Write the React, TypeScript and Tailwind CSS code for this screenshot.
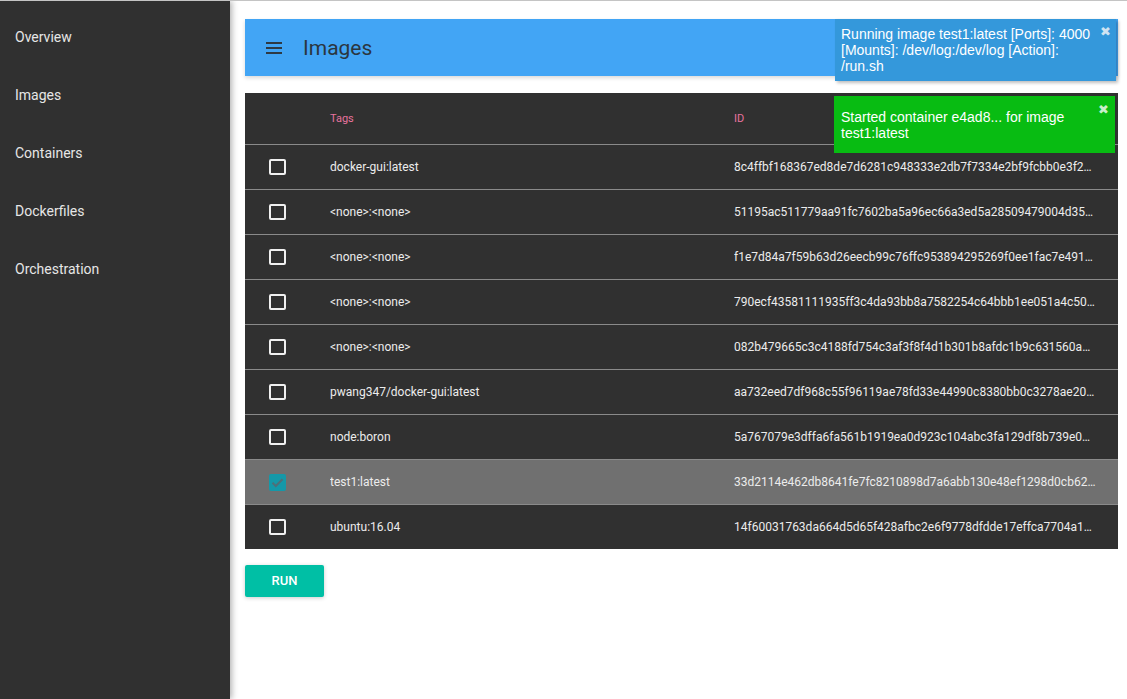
import React from "react";

const rows = [
  { tag: "docker-gui:latest", id: "8c4ffbf168367ed8de7d6281c948333e2db7f7334e2bf9fcbb0e3f2a1b7c9d0e" },
  { tag: "<none>:<none>", id: "51195ac511779aa91fc7602ba5a96ec66a3ed5a28509479004d35c8e2f1a0b3d" },
  { tag: "<none>:<none>", id: "f1e7d84a7f59b63d26eecb99c76ffc953894295269f0ee1fac7e4913c2d8a6b1" },
  { tag: "<none>:<none>", id: "790ecf43581111935ff3c4da93bb8a7582254c64bbb1ee051a4c50d2e6f7a8b9" },
  { tag: "<none>:<none>", id: "082b479665c3c4188fd754c3af3f8f4d1b301b8afdc1b9c631560a7e4d2c1b0a" },
  { tag: "pwang347/docker-gui:latest", id: "aa732eed7df968c55f96119ae78fd33e44990c8380bb0c3278ae20f1e2d3c4b5" },
  { tag: "node:boron", id: "5a767079e3dffa6fa561b1919ea0d923c104abc3fa129df8b739e01c2d3e4f5a" },
  { tag: "test1:latest", id: "33d2114e462db8641fe7fc8210898d7a6abb130e48ef1298d0cb62a1b2c3d4e5", selected: true },
  { tag: "ubuntu:16.04", id: "14f60031763da664d5d65f428afbc2e6f9778dfdde17effca7704a1b2c3d4e5f" },
];

const nav = ["Overview", "Images", "Containers", "Dockerfiles", "Orchestration"];

function Checkbox({ checked }: { checked?: boolean }) {
  if (checked) {
    return (
      <svg width="17" height="17" viewBox="0 0 17 17">
        <rect x="0" y="0" width="17" height="17" rx="2" fill="#1598a8" />
        <path d="M3.5 8.8 L6.8 12 L13.5 5.3" fill="none" stroke="#4f6f78" strokeWidth="2" />
      </svg>
    );
  }
  return <div className="w-[17px] h-[16px] border-2 border-[#f0f0f0] rounded-[2px]" />;
}

export default function App() {
  return (
    <div
      className="relative w-[1127px] h-[699px] overflow-hidden bg-white border-t border-[#c4c4c4] flex"
      style={{ fontFamily: "Roboto, 'Noto Sans', sans-serif" }}
    >
      <aside className="w-[230px] shrink-0 bg-[#303030] shadow-[2px_0_6px_rgba(0,0,0,0.3)] z-10 pt-[8px]">
        {nav.map((n) => (
          <div key={n} className="h-[57.8px] flex items-center pl-[15px] text-[14px] text-[#e6e6e6]">
            {n}
          </div>
        ))}
      </aside>

      <main className="flex-1 min-w-0 pl-[15px] pr-[9px] pt-[18px]">
        <header className="h-[57px] bg-[#42a5f5] flex items-center pl-[20px] shadow-[0_2px_4px_rgba(0,0,0,0.15)]">
          <svg width="18" height="14" viewBox="0 0 18 14" className="mr-[20px] mt-[1px]">
            <rect x="1" y="1" width="16" height="2" fill="#2e3a44" />
            <rect x="1" y="6" width="16" height="2" fill="#2e3a44" />
            <rect x="1" y="11" width="16" height="2" fill="#2e3a44" />
          </svg>
          <h1 className="text-[21px] text-[#2b3640] mt-[2px]">Images</h1>
        </header>

        <div className="mt-[17px] bg-[#303030]">
          <div className="h-[51px] flex items-center text-[11px] text-[#e8739e] pt-[2px]">
            <div className="w-[85px]" />
            <div className="w-[404px]">Tags</div>
            <div className="flex-1">ID</div>
          </div>
          {rows.map((r, i) => (
            <div
              key={i}
              className={
                "h-[45px] flex items-center border-t border-[#8a8a8a] text-[12px] text-[#ececec] " +
                (r.selected ? "bg-[#707070]" : "")
              }
            >
              <div className="w-[85px] pl-[24px] flex items-center">
                <Checkbox checked={r.selected} />
              </div>
              <div className="w-[404px] truncate">{r.tag}</div>
              <div className="flex-1 min-w-0 pr-[22px] truncate">{r.id}</div>
            </div>
          ))}
        </div>

        <button className="mt-[16px] w-[79px] h-[32px] bg-[#00bfa5] text-white text-[13px] font-medium rounded-[2px] shadow-[0_1px_4px_rgba(0,0,0,0.2)]">
          RUN
        </button>
      </main>

      <div
        className="absolute top-[18px] right-[11px] w-[281px] bg-[#3498db] text-white text-[14px] leading-[16px] pl-[6px] pr-[17px] pt-[7px] pb-[7px] shadow-[2px_2px_3px_rgba(0,0,0,0.25)]"
        style={{ fontFamily: "'Liberation Sans', Arial, sans-serif" }}
      >
        Running image test1:latest [Ports]: 4000 [Mounts]: /dev/log:/dev/log [Action]: /run.sh
        <span className="absolute top-[6px] right-[5px] text-[13px] leading-[14px] text-[#cfe3f2]">✖</span>
      </div>

      <div
        className="absolute top-[95px] right-[12px] w-[281px] bg-[#08bc12] text-white text-[14px] leading-[16px] pl-[7px] pr-[17px] pt-[13px] pb-[12px]"
        style={{ fontFamily: "'Liberation Sans', Arial, sans-serif" }}
      >
        Started container e4ad8... for image test1:latest
        <span className="absolute top-[7px] right-[6px] text-[13px] leading-[14px] text-[#c9efcb]">✖</span>
      </div>
    </div>
  );
}
